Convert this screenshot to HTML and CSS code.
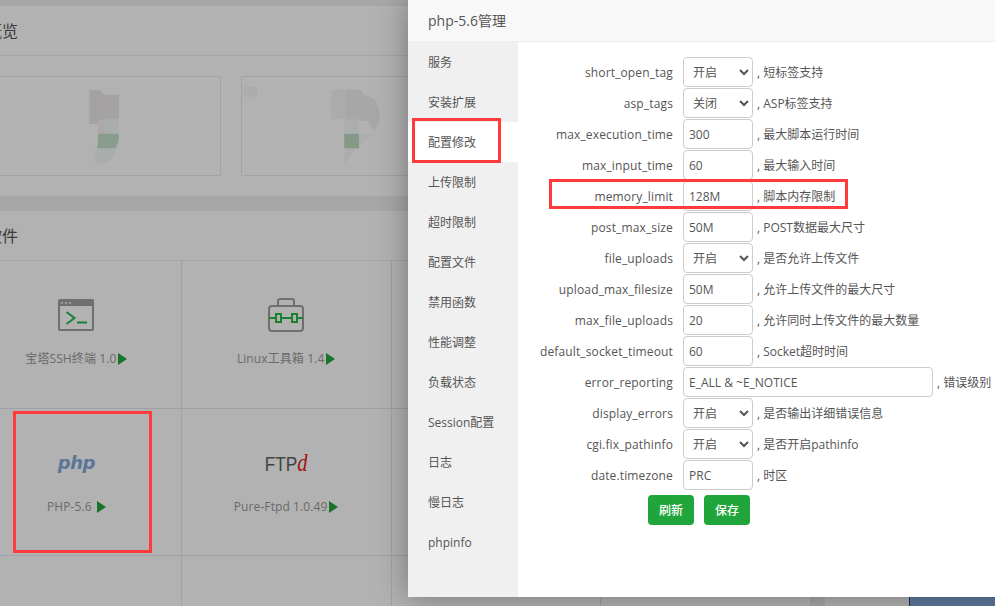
FILE: index.html
```html
<!DOCTYPE html>
<html>
<head>
    <title>php-5.6管理</title>
    <meta charset="utf-8">
    <link rel="stylesheet" href="styles.css">
</head>
<body>
  <div class="page">
    <div class="main-col">
      <section class="panel overview">
        <h2 class="panel-title">概览</h2>
        <div class="maps">
          <div class="map-card">
            <svg class="map-art" viewBox="0 0 230 100">
              <path fill="#ebe9e9" d="M98 13h10l5 5h15v30H98z"/>
              <path fill="#f4f8f6" d="M113 43h15v15h-15z"/>
              <path fill="#f6f1f0" d="M107 43h6v15h-6z"/>
              <path fill="#c6e0c8" d="M107 58h21v6l-3 9h-19z"/>
              <path fill="#f2f8f6" d="M104 73h21c-2 8-6 15-12 15h-9z"/>
            </svg>
          </div>
          <div class="map-card">
            <svg class="map-art" viewBox="0 0 230 100">
              <path fill="#f8f7f6" d="M0 10h14v10H0z"/>
              <path fill="#f6f5f2" d="M90 13h15v30H90z"/>
              <path fill="#f0f0f0" d="M105 13h15l4 6c10 0 15 10 15 22 0 6-3 10-6 14l-6-10h-22z"/>
              <path fill="#f6f9f8" d="M103 43h15v15h16l-20 15h-11z"/>
              <path fill="#c0dcc2" d="M103 58h15v15h-15z"/>
              <path fill="#f6f9f8" d="M103 73h12l-12 16z"/>
            </svg>
          </div>
        </div>
      </section>
      <section class="panel apps">
        <h2 class="panel-title">软件</h2>
        <div class="app-grid">
          <div class="app-cell">
            <div class="app-icon">
              <svg width="36" height="32" viewBox="0 0 36 32">
                <rect x="1" y="1" width="34" height="30" rx="1" fill="none" stroke="#a0a0a0" stroke-width="2"/>
                <rect x="1" y="1" width="34" height="6" fill="#a0a0a0"/>
                <path fill="#dcdcdc" d="M3 3h2v2H3zM7 3h2v2H7zM11 3h2v2h-2z"/>
                <path fill="none" stroke="#28b848" stroke-width="2" d="M8.500 13l8 6-8 6M19 23.500h10"/>
              </svg>
            </div>
            <div class="app-name">宝塔SSH终端 1.0<span class="arrow"></span></div>
          </div>
          <div class="app-cell">
            <div class="app-icon">
              <svg width="36" height="35" viewBox="0 0 36 35">
                <path fill="none" stroke="#a0a0a0" stroke-width="2" d="M10 8V3q0-2 2-2h12q2 0 2 2v5"/>
                <rect x="1" y="8" width="34" height="25" rx="3" fill="none" stroke="#a0a0a0" stroke-width="2"/>
                <path fill="none" stroke="#28b848" stroke-width="2" d="M1 20h6M13 20h11M30 20h5"/>
                <rect x="8" y="16" width="5" height="8" fill="none" stroke="#28b848" stroke-width="2"/>
                <rect x="24" y="16" width="5" height="8" fill="none" stroke="#28b848" stroke-width="2"/>
              </svg>
            </div>
            <div class="app-name">Linux工具箱 1.4<span class="arrow"></span></div>
          </div>
          <div class="app-cell"></div>
          <div class="app-cell"></div>
          <div class="app-cell">
            <div class="app-icon"><span class="logo-php">php</span></div>
            <div class="app-name">PHP-5.6 <span class="arrow"></span></div>
          </div>
          <div class="app-cell">
            <div class="app-icon"><span class="logo-ftp">FTP<em>d</em></span></div>
            <div class="app-name">Pure-Ftpd 1.0.49<span class="arrow"></span></div>
          </div>
          <div class="app-cell"></div>
          <div class="app-cell"></div>
          <div class="app-cell"></div>
          <div class="app-cell"></div>
          <div class="app-cell"></div>
          <div class="app-cell"></div>
        </div>
      </section>
    </div>
    <aside class="side-col"><div class="side-blue"></div></aside>
  </div>

  <div class="shade"></div>

  <div class="layer">
    <div class="layer-title">php-5.6管理</div>
    <div class="layer-body">
      <ul class="side-menu">
        <li>服务</li>
        <li>安装扩展</li>
        <li class="on">配置修改</li>
        <li>上传限制</li>
        <li>超时限制</li>
        <li>配置文件</li>
        <li>禁用函数</li>
        <li>性能调整</li>
        <li>负载状态</li>
        <li>Session配置</li>
        <li>日志</li>
        <li>慢日志</li>
        <li>phpinfo</li>
      </ul>
      <div class="conf-form">
        <div class="conf-row">
          <label>short_open_tag</label>
          <select class="conf-box"><option>开启</option><option>关闭</option></select>
          <span class="conf-tip">, 短标签支持</span>
        </div>
        <div class="conf-row">
          <label>asp_tags</label>
          <select class="conf-box"><option>关闭</option><option>开启</option></select>
          <span class="conf-tip">, ASP标签支持</span>
        </div>
        <div class="conf-row">
          <label>max_execution_time</label>
          <input class="conf-box" type="text" value="300">
          <span class="conf-tip">, 最大脚本运行时间</span>
        </div>
        <div class="conf-row">
          <label>max_input_time</label>
          <input class="conf-box" type="text" value="60">
          <span class="conf-tip">, 最大输入时间</span>
        </div>
        <div class="conf-row">
          <label>memory_limit</label>
          <input class="conf-box" type="text" value="128M">
          <span class="conf-tip">, 脚本内存限制</span>
        </div>
        <div class="conf-row">
          <label>post_max_size</label>
          <input class="conf-box" type="text" value="50M">
          <span class="conf-tip">, POST数据最大尺寸</span>
        </div>
        <div class="conf-row">
          <label>file_uploads</label>
          <select class="conf-box"><option>开启</option><option>关闭</option></select>
          <span class="conf-tip">, 是否允许上传文件</span>
        </div>
        <div class="conf-row">
          <label>upload_max_filesize</label>
          <input class="conf-box" type="text" value="50M">
          <span class="conf-tip">, 允许上传文件的最大尺寸</span>
        </div>
        <div class="conf-row">
          <label>max_file_uploads</label>
          <input class="conf-box" type="text" value="20">
          <span class="conf-tip">, 允许同时上传文件的最大数量</span>
        </div>
        <div class="conf-row">
          <label>default_socket_timeout</label>
          <input class="conf-box" type="text" value="60">
          <span class="conf-tip">, Socket超时时间</span>
        </div>
        <div class="conf-row">
          <label>error_reporting</label>
          <input class="conf-box wide" type="text" value="E_ALL &amp; ~E_NOTICE">
          <span class="conf-tip">, 错误级别</span>
        </div>
        <div class="conf-row">
          <label>display_errors</label>
          <select class="conf-box"><option>开启</option><option>关闭</option></select>
          <span class="conf-tip">, 是否输出详细错误信息</span>
        </div>
        <div class="conf-row">
          <label>cgi.fix_pathinfo</label>
          <select class="conf-box"><option>开启</option><option>关闭</option></select>
          <span class="conf-tip">, 是否开启pathinfo</span>
        </div>
        <div class="conf-row">
          <label>date.timezone</label>
          <input class="conf-box" type="text" value="PRC">
          <span class="conf-tip">, 时区</span>
        </div>
        <div class="conf-btns">
          <button class="btn-green">刷新</button>
          <button class="btn-green">保存</button>
        </div>
      </div>
    </div>
  </div>

  <div class="mark mark-php"></div>
  <div class="mark mark-menu"></div>
  <div class="mark mark-memory"></div>
</body>
</html>
```

FILE: styles.css
```css
* {
    box-sizing: border-box;
}

html, body {
    margin: 0;
    height: 100%;
}

body {
    position: relative;
    overflow: hidden;
    background-color: #f0f0f0;
    font-family: "Open Sans", "Noto Sans CJK SC", sans-serif;
    font-size: 12px;
    color: #555;
}

/* page under the layer */
.page {
    display: flex;
    gap: 14px;
    width: 1100px;
    height: 606px;
    margin-left: -28px;
    padding-top: 6px;
    overflow: hidden;
}

.main-col {
    width: 839px;
    flex-shrink: 0;
}

.side-col {
    flex: 1;
    display: flex;
    flex-direction: column;
    justify-content: flex-end;
    margin-top: -6px;
    background-color: #fff;
}

.side-blue {
    height: 40px;
    margin-left: 84px;
    background-color: #86aedf;
    border-left: 1px solid #2c4a70;
}

.panel {
    background-color: #fff;
}

.overview {
    height: 190px;
    margin-bottom: 15px;
}

.panel-title {
    height: 50px;
    margin: 0;
    padding-left: 14px;
    border-bottom: 1px solid #ececec;
    font-size: 16px;
    font-weight: 400;
    line-height: 50px;
    color: #555;
}

.maps {
    display: flex;
    gap: 20px;
    padding: 20px 19px;
}

.map-card {
    width: 230px;
    height: 100px;
    flex-shrink: 0;
    border: 1px solid #eaeaea;
}

.map-art {
    display: block;
    width: 228px;
    height: 98px;
}

.app-grid {
    display: grid;
    grid-template-columns: repeat(4, 1fr);
    grid-auto-rows: 147.5px;
}

.app-cell {
    display: flex;
    flex-direction: column;
    align-items: center;
    padding-top: 36px;
    border-right: 1px solid #e6e6f0;
    border-bottom: 1px solid #e6e6f0;
}

.app-icon {
    display: flex;
    align-items: center;
    justify-content: center;
    height: 36px;
}

.app-name {
    margin-top: 16px;
    line-height: 20px;
    letter-spacing: 0.1px;
    color: #999;
    white-space: pre;
}

.arrow {
    display: inline-block;
    width: 0;
    height: 0;
    margin-left: 2px;
    border-left: 9px solid #20a53a;
    border-top: 6px solid transparent;
    border-bottom: 6px solid transparent;
    vertical-align: -2px;
}

.logo-php {
    font-family: "DejaVu Sans", sans-serif;
    font-size: 18px;
    font-weight: 700;
    font-style: italic;
    letter-spacing: -0.4px;
    color: #86a6dc;
}

.logo-ftp {
    display: inline-block;
    transform: scaleX(0.82);
    font-family: "Liberation Sans", sans-serif;
    font-size: 21px;
    color: #606060;
}

.logo-ftp em {
    font-family: "Liberation Serif", serif;
    font-size: 25px;
    color: #e81c1c;
}

.shade {
    position: absolute;
    top: 0;
    left: 0;
    width: 100%;
    height: 100%;
    background-color: rgba(0, 0, 0, 0.3);
}

/* the layer window */
.layer {
    position: absolute;
    top: 0;
    left: 408px;
    width: 620px;
    height: 597px;
    background-color: #fff;
    box-shadow: 0 0 30px rgba(0, 0, 0, 0.35);
}

.layer-title {
    height: 42px;
    padding-left: 20px;
    border-bottom: 1px solid #eee;
    background-color: #f8f8f8;
    font-size: 14px;
    line-height: 41px;
    color: #555;
}

.layer-body {
    display: flex;
}

.side-menu {
    width: 110px;
    height: 555px;
    margin: 0;
    padding: 0;
    flex-shrink: 0;
    list-style: none;
    background-color: #f0f0f0;
}

.side-menu li {
    height: 40px;
    padding-left: 20px;
    line-height: 42px;
    color: #555;
}

.side-menu li.on {
    background-color: #fff;
}

.conf-form {
    padding-top: 15px;
}

.conf-row {
    display: flex;
    align-items: center;
    height: 30px;
    margin-bottom: 1px;
}

.conf-row label {
    width: 155px;
    margin-right: 10px;
    letter-spacing: 0.14px;
    text-align: right;
    white-space: nowrap;
}

.conf-box {
    width: 70px;
    height: 30px;
    padding: 0 5px;
    border: 1px solid #ccc;
    border-radius: 4px;
    background-color: #fff;
    font-family: inherit;
    font-size: 12px;
    color: #555;
}

.conf-box.wide {
    width: 250px;
}

.conf-tip {
    margin-left: 4px;
    white-space: nowrap;
}

.conf-btns {
    display: flex;
    gap: 10px;
    margin-top: 5px;
    margin-left: 130px;
}

.btn-green {
    width: 46px;
    height: 30px;
    padding: 0;
    border: 0;
    border-radius: 4px;
    background-color: #20a53a;
    font-family: inherit;
    font-size: 12px;
    font-weight: 500;
    color: #fff;
}

/* red annotation boxes drawn over the screenshot */
.mark {
    position: absolute;
    border: 3px solid #ff3b3b;
}

.mark-php {
    top: 411px;
    left: 13px;
    width: 139px;
    height: 142px;
}

.mark-menu {
    top: 118px;
    left: 412px;
    width: 89px;
    height: 45px;
}

.mark-memory {
    top: 179px;
    left: 549px;
    width: 299px;
    height: 30px;
}
```
